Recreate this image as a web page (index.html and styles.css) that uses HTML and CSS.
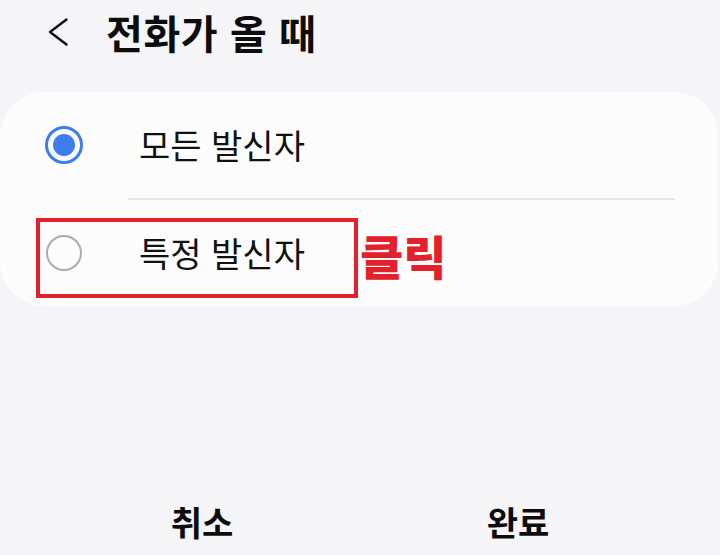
FILE: index.html
```html
<!DOCTYPE html>
<html lang="ko">
<head>
<meta charset="utf-8">
<link rel="stylesheet" href="styles.css">
</head>
<body>
<div class="screen">
  <header class="header">
    <svg class="back" width="24" height="32" viewBox="0 0 24 32"><path d="M21.5 3.5 L5 16 L21.5 28.5" fill="none" stroke="#111" stroke-width="2.4" stroke-linecap="round" stroke-linejoin="round"/></svg>
    <h1 class="title">전화가 올 때</h1>
  </header>
  <section class="card">
    <div class="row">
      <span class="radio radio-on"><span class="dot"></span></span>
      <span class="label">모든 발신자</span>
    </div>
    <div class="divider"></div>
    <div class="row">
      <span class="radio radio-off"></span>
      <span class="label">특정 발신자</span>
      <span class="highlight"></span>
      <span class="note">클릭</span>
    </div>
  </section>
  <div class="spacer"></div>
  <footer class="footer">
    <button class="btn">취소</button>
    <button class="btn">완료</button>
  </footer>
</div>
</body>
</html>
```
FILE: styles.css
```css
html, body {
  margin: 0;
  padding: 0;
  background: #f5f5f7;
}
body {
  font-family: "Noto Sans CJK KR", "Noto Sans", sans-serif;
  color: #111;
}
.screen {
  width: 720px;
  height: 555px;
  display: flex;
  flex-direction: column;
}
.header {
  height: 64px;
  display: flex;
  align-items: center;
  padding-left: 45px;
  gap: 37px;
}
.back {
  display: block;
}
.title {
  margin: 0;
  font-size: 40px;
  font-weight: 700;
  line-height: 1;
  letter-spacing: 0.6px;
  color: #0d0d0d;
}
.card {
  margin: 28px 2px 0 0;
  background: #fcfcfd;
  border-radius: 44px;
  display: flex;
  flex-direction: column;
}
.row {
  position: relative;
  height: 106px;
  display: flex;
  align-items: center;
  padding-left: 45px;
}
.divider {
  height: 2px;
  background: #e4e4e6;
  margin: 0 43px 0 128px;
}
.radio {
  width: 38px;
  height: 38px;
  box-sizing: border-box;
  border-radius: 50%;
  display: flex;
  align-items: center;
  justify-content: center;
  flex: none;
}
.radio-on {
  border: 3.5px solid #3d7df0;
}
.radio-on .dot {
  width: 22px;
  height: 22px;
  border-radius: 50%;
  background: #3d7df0;
}
.radio-off {
  width: 36px;
  height: 36px;
  margin-left: 1px;
  margin-right: 1px;
  border: 2.5px solid #ababab;
}
.label {
  margin-left: 56px;
  font-size: 34px;
  line-height: 1;
  color: #111;
}
.highlight {
  position: absolute;
  left: 36px;
  top: 18px;
  width: 322px;
  height: 80px;
  box-sizing: border-box;
  border: 4px solid #e3202b;
}
.note {
  position: absolute;
  left: 360px;
  top: 31px;
  font-size: 47px;
  font-weight: 900;
  line-height: 1;
  color: #e3202b;
}
.spacer {
  flex: 1;
}
.footer {
  height: 68px;
  display: flex;
  padding: 0 44px;
}
.btn {
  flex: 1;
  border: 0;
  background: transparent;
  font-family: "Noto Sans CJK KR", "Noto Sans", sans-serif;
  font-size: 34px;
  font-weight: 700;
  color: #0d0d0d;
  padding: 0;
  margin: 0;
}
```
